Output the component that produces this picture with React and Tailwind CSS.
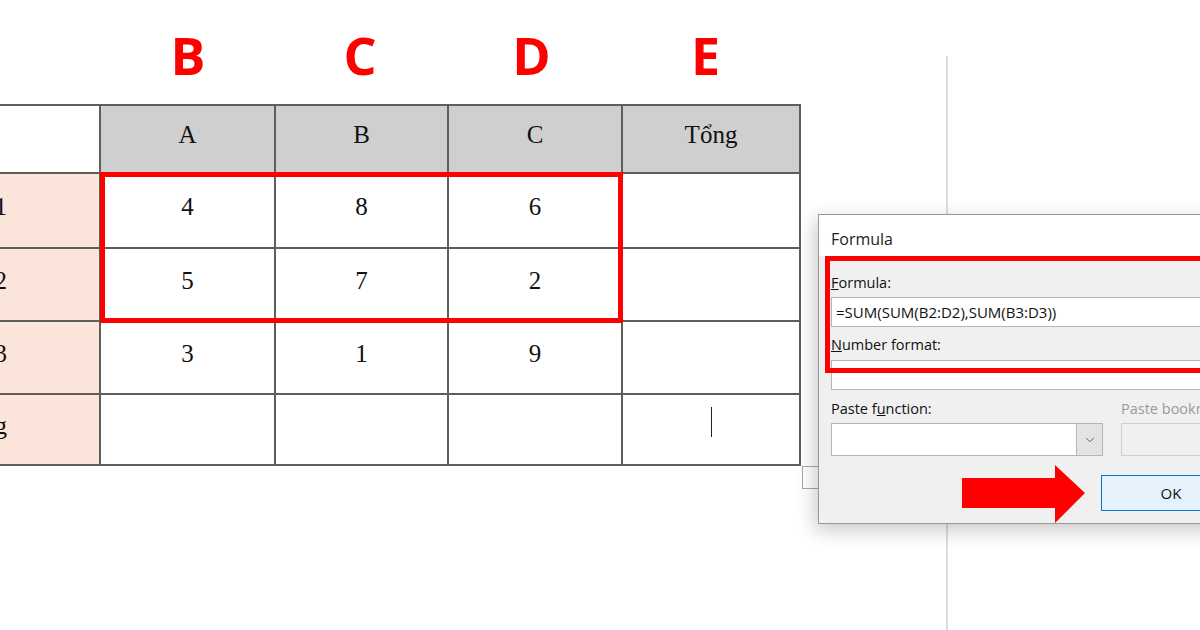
import React from "react";
import { ChevronDown } from "lucide-react";

const cols = "grid grid-cols-[99px_173px_171px_172px_176px]";
const serif = "font-['Liberation_Serif','Times_New_Roman',serif]";
const ui = "font-['Open_Sans','Noto_Sans',sans-serif]";

const rows = [
    { label: "Dòng 1", values: ["4", "8", "6"] },
    { label: "Dòng 2", values: ["5", "7", "2"] },
    { label: "Dòng 3", values: ["3", "1", "9"] },
    { label: "Tổng", values: ["", "", ""], cursor: true },
];

const Cell = ({ children, className = "" }) => (
    <div className={`flex items-center justify-center pb-2 text-[25px] text-[#111] ${serif} ${className}`}>{children}</div>
);

const WordTable = () => (
    <div className="relative w-[801px]">
        <div className={`${cols} grid-rows-[66px_73px_71px_71px_69px] gap-[2px] bg-[#5e5e5e] pt-[2px] pr-[2px] pb-[2px]`}>
            <div className="bg-white" />
            {["A", "B", "C", "Tổng"].map((h) => (
                <Cell key={h} className="bg-[#d0cfd0]">{h}</Cell>
            ))}
            {rows.map((row) => (
                <React.Fragment key={row.label}>
                    <div className={`flex items-center justify-end whitespace-nowrap bg-[#fbe4d9] pb-2 pr-[92px] text-[25px] text-[#111] ${serif}`}>
                        {row.label}
                    </div>
                    {row.values.map((v, i) => (
                        <Cell key={i} className="bg-white">{v}</Cell>
                    ))}
                    <div className="flex justify-center bg-white pt-[12px]">
                        {row.cursor && <div className="h-[30px] w-px bg-[#222]" />}
                    </div>
                </React.Fragment>
            ))}
        </div>
        {/* red highlight over B..D, rows 1-2 */}
        <div className="absolute left-[100px] top-[68px] h-[151px] w-[523px] border-[5px] border-[#ff0000]" />
    </div>
);

const FormulaDialog = () => (
    <div className={`absolute left-[818px] top-[214px] h-[310px] w-[420px] border border-[#999] bg-[#f0f0f0] shadow-[-3px_6px_18px_rgba(0,0,0,0.22)] ${ui}`}>
        <div className="flex h-[41px] items-center bg-white pl-[12px] pt-[6px] text-[16px] text-[#222]">Formula</div>
        <div className="pl-[12px] pt-[17px] text-[14.5px] leading-[20px] text-[#111]">
            <p><span className="underline">F</span>ormula:</p>
            <div className="mt-[4px] flex h-[30px] items-center border border-[#b5b5b5] bg-white pl-[4px] text-[15px] text-[#111]">
                =SUM(SUM(B2:D2),SUM(B3:D3))
            </div>
            <p className="mt-[8px]"><span className="underline">N</span>umber format:</p>
            <div className="mt-[5px] h-[30px] border border-[#b5b5b5] bg-white" />
            <div className="mt-[9px] flex gap-[18px]">
                <div className="w-[272px]">
                    <p>Paste f<span className="underline">u</span>nction:</p>
                    <div className="mt-[4px] flex h-[33px] justify-end border border-[#b5b5b5] bg-white">
                        <div className="flex w-[26px] items-center justify-center border-l border-[#b5b5b5] bg-[#e3e3e3]">
                            <ChevronDown size={14} strokeWidth={1.5} className="text-[#555]" />
                        </div>
                    </div>
                </div>
                <div className="flex-1">
                    <p className="text-[#9a9a9a]">Paste bookmark:</p>
                    <div className="mt-[4px] h-[33px] border border-[#cfcfcf] bg-[#f0f0f0]" />
                </div>
            </div>
            <button className="ml-[270px] mt-[19px] flex h-[36px] w-[140px] items-center justify-center border border-[#0078d7] bg-[#e5f1fb] text-[15px] text-[#111]">
                OK
            </button>
        </div>
        {/* red highlight on formula fields */}
        <div className="absolute left-[6px] top-[41px] h-[117px] w-[420px] border-[5px] border-[#ff0000]" />
    </div>
);

export default function App() {
    return (
        <div className="relative h-[630px] w-[1200px] overflow-hidden bg-white">
            <div className="flex h-full">
                <div className="w-[946px]">
                    <div className={`${cols} h-[104px] items-center pt-[6px] font-['Open_Sans','Noto_Sans',sans-serif] text-[52px] font-bold text-[#ff0000]`}>
                        <div />
                        {["B", "C", "D", "E"].map((l) => (
                            <div key={l} className="pl-[5px] text-center">{l}</div>
                        ))}
                    </div>
                    <WordTable />
                    <div className="ml-[802px] h-[23px] w-[18px] border border-[#a8a8a8]" />
                </div>
                <div className="mt-[56px] border-l-2 border-[#dcdcdc]" />
            </div>

            <FormulaDialog />

            {/* red arrow pointing at OK */}
            <svg className="absolute left-[962px] top-[465px]" width="124" height="58" viewBox="0 0 124 58">
                <polygon points="0,13 93,13 93,0 123,28 93,58 93,43 0,43" fill="#ff0000" />
            </svg>
        </div>
    );
}
